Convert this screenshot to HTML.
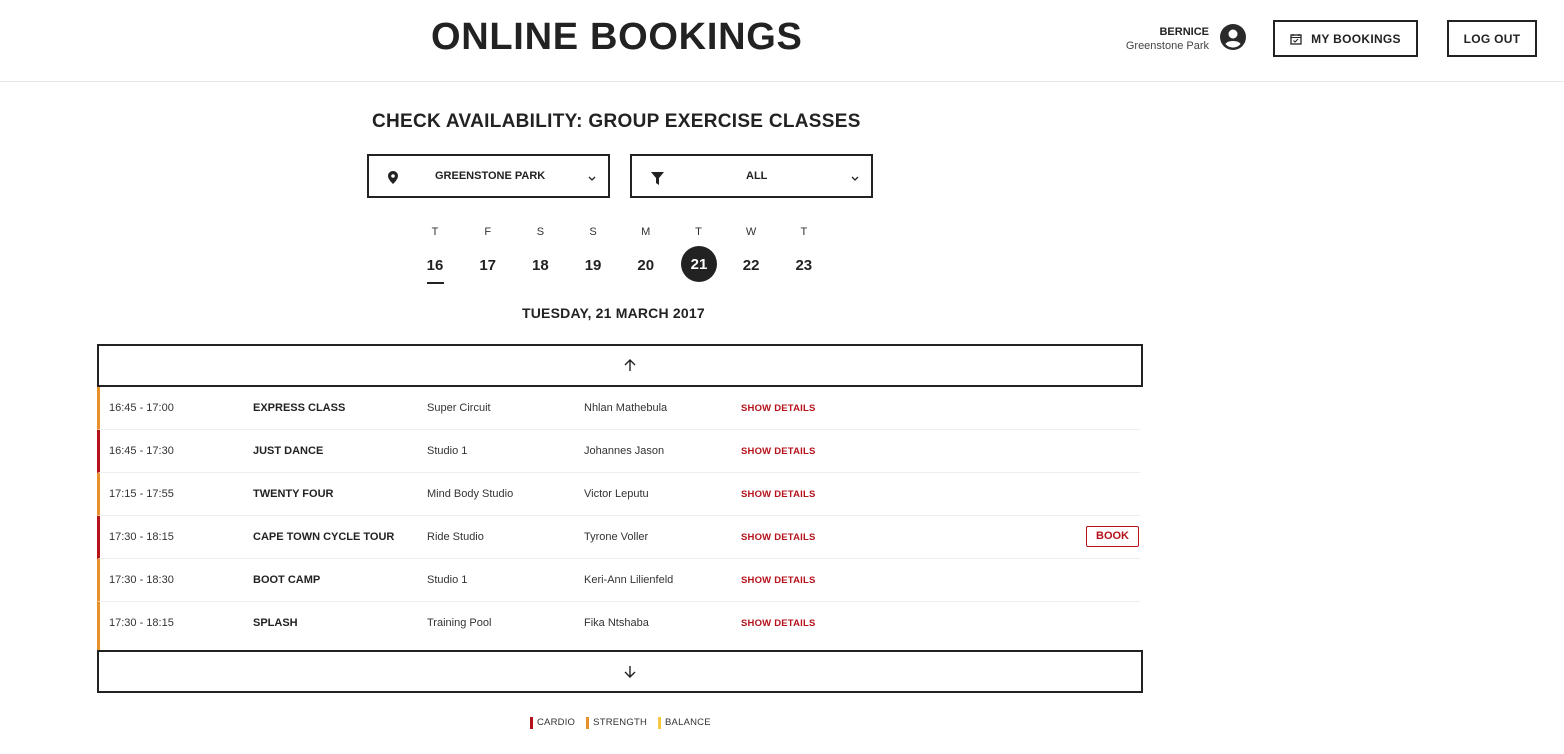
<!DOCTYPE html>
<html><head><meta charset="utf-8"><style>
*{margin:0;padding:0;box-sizing:border-box}
body{width:1564px;height:754px;background:#fff;font-family:"Liberation Sans",sans-serif;color:#222;position:relative;overflow:hidden}
.a{position:absolute}
.hdr{left:0;top:0;width:1564px;height:82px;border-bottom:1px solid #e6e6e6}
.btn{border:2px solid #222;font-weight:bold;font-size:12px;display:flex;align-items:center;justify-content:center;letter-spacing:.3px}
.sel{border:2px solid #222;font-weight:bold;font-size:11px}
.day{width:40px;text-align:center}
.row{left:97px;width:1043px;height:43px;border-bottom:1px solid #eee;font-size:11px;color:#333}
.row span{position:absolute;top:15px}
.row .n{font-weight:bold;color:#222}
.row .d{color:#b5121b;font-weight:bold;font-size:9.5px;top:16px;letter-spacing:.2px}
</style></head><body>
<div class="a hdr"></div>
<div class="a" style="left:431px;top:16px;font-size:38px;font-weight:bold;letter-spacing:.7px;color:#222">ONLINE BOOKINGS</div>
<div class="a" style="right:355px;top:25px;text-align:right;font-size:11px;line-height:14px"><b>BERNICE</b><br><span style="color:#444">Greenstone Park</span></div>
<svg class="a" style="left:1220px;top:24px" width="26" height="26" viewBox="0 0 26 26"><circle cx="13" cy="13" r="13" fill="#2a2a2a"/><circle cx="13" cy="10" r="4.5" fill="#fff"/><path d="M5.5 20c2-4 13-4 15 0c-2 2.5-5 3.5-7.5 3.5s-5.5-1-7.5-3.5z" fill="#fff"/></svg>
<div class="a btn" style="left:1273px;top:20px;width:145px;height:37px"><svg width="12" height="12" viewBox="0 0 12 12" style="margin-right:9px"><rect x="1" y="2" width="10" height="9" fill="none" stroke="#222" stroke-width="1.3"/><path d="M3 1v2M9 1v2M1 4.5h10M3.5 7.5l1.5 1.5 3-3" stroke="#222" fill="none" stroke-width="1.1"/></svg>MY BOOKINGS</div>
<div class="a btn" style="left:1447px;top:20px;width:90px;height:37px">LOG OUT</div>

<div class="a" style="left:372px;top:111px;font-size:19px;font-weight:bold;letter-spacing:.3px">CHECK AVAILABILITY: GROUP EXERCISE CLASSES</div>
<div class="a sel" style="left:367px;top:154px;width:243px;height:44px"><svg class="a" style="left:19px;top:15px" width="10" height="13" viewBox="0 0 10 13"><path d="M5 0C2.2 0 0 2.2 0 5c0 3.5 5 8 5 8s5-4.5 5-8C10 2.2 7.8 0 5 0z" fill="#222"/><circle cx="5" cy="5" r="1.8" fill="#fff"/></svg><span class="a" style="left:66px;top:14px">GREENSTONE PARK</span><svg class="a" style="left:219px;top:20px" width="8" height="5" viewBox="0 0 8 5"><path d="M1 1l3 3 3-3" stroke="#222" stroke-width="1.3" fill="none"/></svg></div>
<div class="a sel" style="left:630px;top:154px;width:243px;height:44px"><svg class="a" style="left:19px;top:16px" width="13" height="13" viewBox="0 0 13 13"><path d="M0 0h13L8 6v7L5 11V6z" fill="#222"/></svg><span class="a" style="left:114px;top:14px">ALL</span><svg class="a" style="left:219px;top:20px" width="8" height="5" viewBox="0 0 8 5"><path d="M1 1l3 3 3-3" stroke="#222" stroke-width="1.3" fill="none"/></svg></div>

<div class="a" style="left:415px;top:226px;display:flex;gap:12.7px;font-size:11px;color:#333">
<div class="day">T</div><div class="day">F</div><div class="day">S</div><div class="day">S</div><div class="day">M</div><div class="day">T</div><div class="day">W</div><div class="day">T</div></div>
<div class="a" style="left:415px;top:257px;display:flex;gap:12.7px;font-size:15px;font-weight:bold">
<div class="day">16</div><div class="day">17</div><div class="day">18</div><div class="day">19</div><div class="day">20</div><div class="day" style="color:#fff;position:relative">21</div><div class="day">22</div><div class="day">23</div></div>
<div class="a" style="left:681px;top:246px;width:36px;height:36px;border-radius:50%;background:#222;color:#fff;font-size:15px;font-weight:bold;text-align:center;line-height:37px">21</div>
<div class="a" style="left:427px;top:282px;width:17px;height:2px;background:#222"></div>
<div class="a" style="left:522px;top:305px;font-size:14px;font-weight:bold;letter-spacing:.2px">TUESDAY, 21 MARCH 2017</div>

<div class="a" style="left:97px;top:344px;width:1046px;height:43px;border:2px solid #222"><svg class="a" style="left:525px;top:13px" width="12" height="13" viewBox="0 0 12 13"><path d="M6 12V1M1 6l5-5 5 5" stroke="#222" stroke-width="1.4" fill="none"/></svg></div>
<div class="a row" style="top:387px;border-left:3px solid #e8912a"><span style="left:9px">16:45 - 17:00</span><span class="n" style="left:153px">EXPRESS CLASS</span><span style="left:327px">Super Circuit</span><span style="left:484px">Nhlan Mathebula</span><span class="d" style="left:641px">SHOW DETAILS</span></div>
<div class="a row" style="top:430px;border-left:3px solid #b5121b"><span style="left:9px">16:45 - 17:30</span><span class="n" style="left:153px">JUST DANCE</span><span style="left:327px">Studio 1</span><span style="left:484px">Johannes Jason</span><span class="d" style="left:641px">SHOW DETAILS</span></div>
<div class="a row" style="top:473px;border-left:3px solid #e8912a"><span style="left:9px">17:15 - 17:55</span><span class="n" style="left:153px">TWENTY FOUR</span><span style="left:327px">Mind Body Studio</span><span style="left:484px">Victor Leputu</span><span class="d" style="left:641px">SHOW DETAILS</span></div>
<div class="a row" style="top:516px;border-left:3px solid #b5121b"><span style="left:9px">17:30 - 18:15</span><span class="n" style="left:153px">CAPE TOWN CYCLE TOUR</span><span style="left:327px">Ride Studio</span><span style="left:484px">Tyrone Voller</span><span class="d" style="left:641px">SHOW DETAILS</span><span class="a" style="left:986px;top:10px;width:53px;height:21px;border:1px solid #b5121b;border-radius:2px;color:#b5121b;font-weight:bold;font-size:11px;text-align:center;line-height:19px">BOOK</span></div>
<div class="a row" style="top:559px;border-left:3px solid #e8912a"><span style="left:9px">17:30 - 18:30</span><span class="n" style="left:153px">BOOT CAMP</span><span style="left:327px">Studio 1</span><span style="left:484px">Keri-Ann Lilienfeld</span><span class="d" style="left:641px">SHOW DETAILS</span></div>
<div class="a row" style="top:602px;border-left:3px solid #e8912a;height:48px;border-bottom:none"><span style="left:9px">17:30 - 18:15</span><span class="n" style="left:153px">SPLASH</span><span style="left:327px">Training Pool</span><span style="left:484px">Fika Ntshaba</span><span class="d" style="left:641px">SHOW DETAILS</span></div>
<div class="a" style="left:97px;top:650px;width:1046px;height:43px;border:2px solid #222"><svg class="a" style="left:525px;top:13px" width="12" height="13" viewBox="0 0 12 13"><path d="M6 1v11M1 7l5 5 5-5" stroke="#222" stroke-width="1.4" fill="none"/></svg></div>

<div class="a" style="left:530px;top:717px;font-size:9.5px;color:#333;display:flex;gap:11px;line-height:12px;letter-spacing:.2px">
<span style="border-left:3px solid #b5121b;padding-left:4px">CARDIO</span><span style="border-left:3px solid #e8912a;padding-left:4px">STRENGTH</span><span style="border-left:3px solid #f5c842;padding-left:4px">BALANCE</span></div>
</body></html>
